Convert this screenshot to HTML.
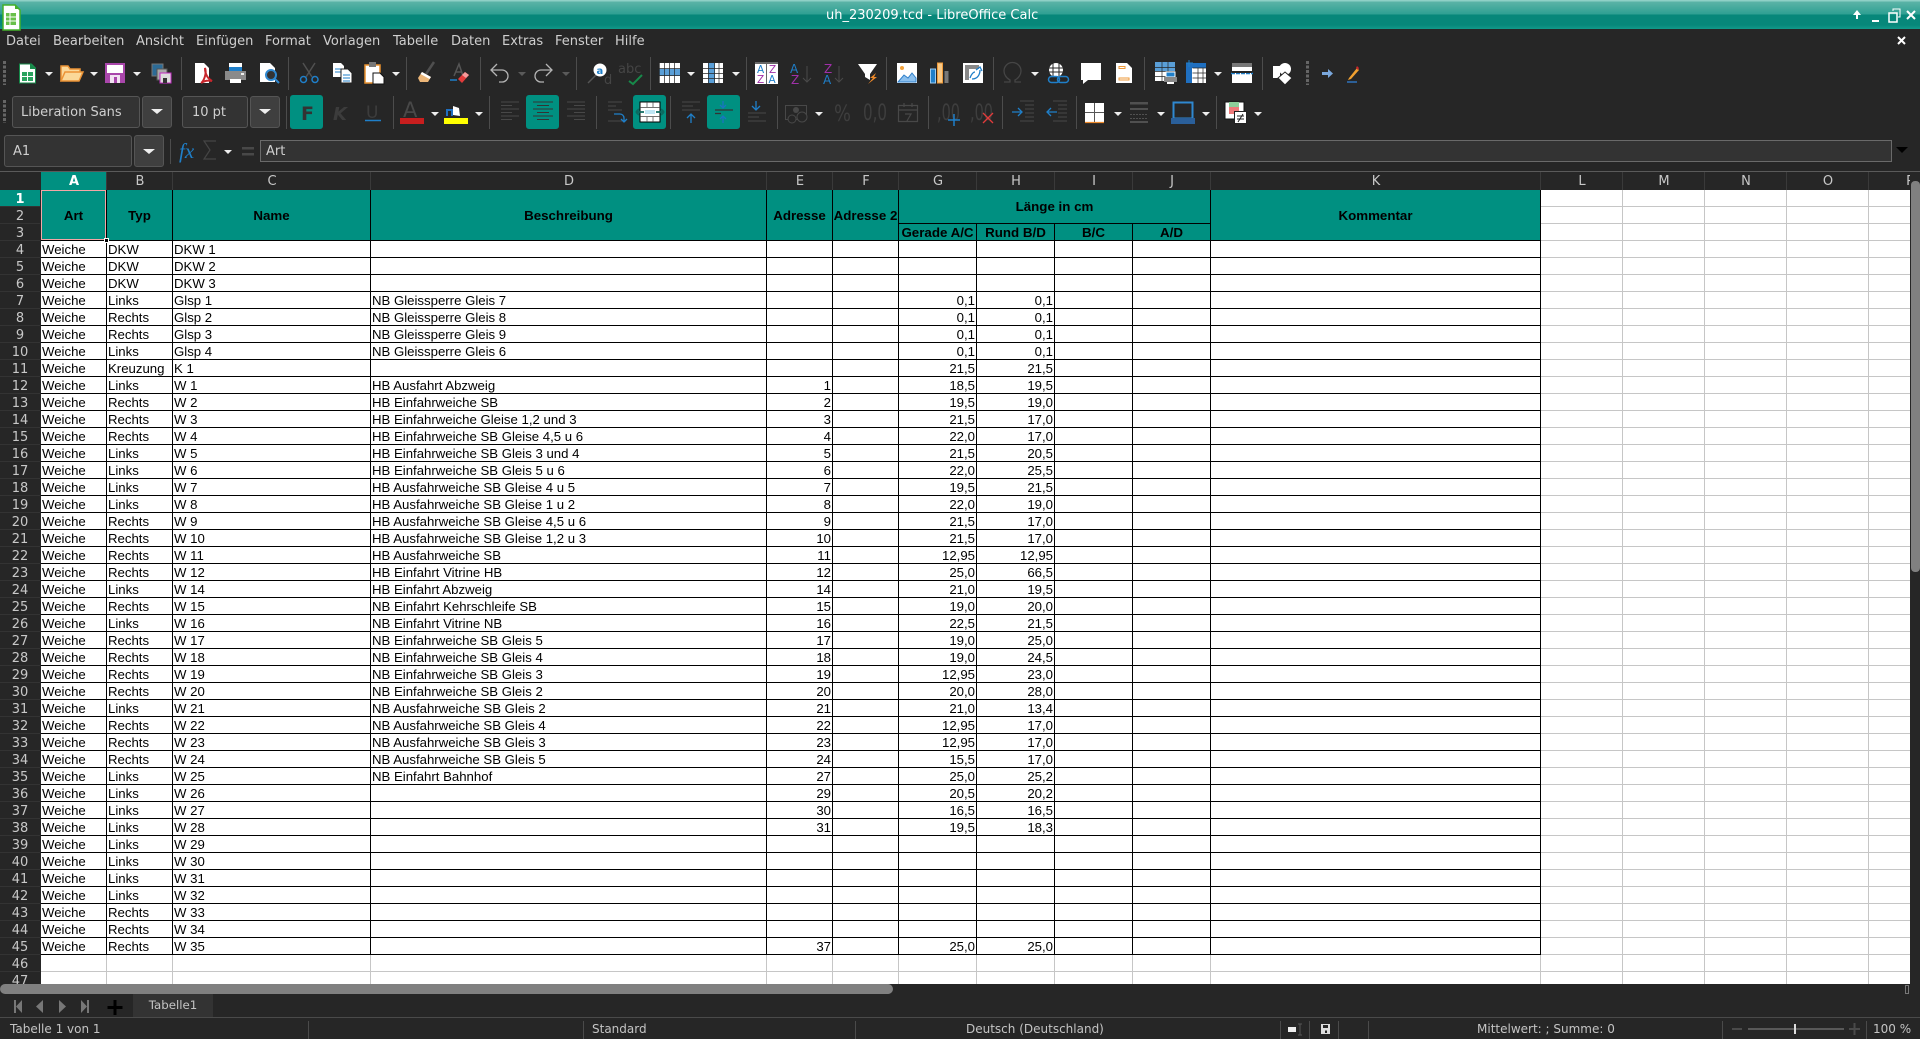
<!DOCTYPE html>
<html lang="de"><head><meta charset="utf-8"><title>uh_230209.tcd - LibreOffice Calc</title>
<style>
html,body{margin:0;padding:0;background:#262626;width:1920px;height:1039px;overflow:hidden}
body{position:relative;font-family:"DejaVu Sans",sans-serif;font-size:13px;color:#cfcfcf}
.abs,.m,.st{position:absolute;white-space:nowrap}
#title{position:absolute;left:0;top:0;width:1920px;height:29px;background:linear-gradient(#8fd0c6 0,#8fd0c6 1px,#5ab3a6 2px,#2fa093 14px,#07877a 15px,#07877a 25px,#12998a 29px);}
#title span{position:absolute;left:826px;top:8px;color:#fff;line-height:16px}
.m{top:34px;line-height:16px}
.box{position:absolute;background:#333;border:1px solid #555;border-radius:3px;box-sizing:border-box;line-height:32px;color:#cfcfcf}
.dd{position:absolute;background:#3f3f3f;border:1px solid #555;border-radius:3px;box-sizing:border-box}
.tb{position:absolute;background:#009081;border-radius:3px}
#ch,#rh{position:absolute;background:#262626;overflow:hidden}
#ch{left:41px;top:172px;width:1869px;height:18px}
#ch div{position:absolute;top:0;height:18px;line-height:20px;text-align:center;border-right:1px solid #3a3a3a;box-sizing:border-box;color:#c8c8c8;padding-left:1px}
#rh{left:0;top:190px;width:41px;height:794px}
#rh div{height:17px;line-height:19px;text-align:center;width:40px;color:#c8c8c8;box-sizing:border-box;border-bottom:1px solid #333}
#sheet{position:absolute;left:41px;top:190px;width:1869px;height:794px;overflow:hidden;background:#fff repeating-linear-gradient(to bottom,transparent 0,transparent 16px,#c6c6c6 16px,#c6c6c6 17px);font-family:"Liberation Sans",sans-serif;font-size:13.2px;color:#000}
.vg,.vb{position:absolute;top:0;width:1px;height:794px;background:#c6c6c6}
.vb{height:765px;background:#000}
.h{position:absolute;font-weight:bold;font-size:13.33px;text-align:center;white-space:nowrap;color:#000}
.r{height:17px;line-height:17px;position:relative}
.r span{position:absolute;white-space:nowrap;top:0}
.a{left:1px}.b{left:67px}.c{left:133px}.d{left:331px}.e{right:1079px}.g{right:935px}.i{right:857px}
.st{top:1022px;font-size:12px;line-height:15px;color:#c4c4c4}
</style></head><body>
<div id="title"><span>uh_230209.tcd - LibreOffice Calc</span></div>
<span class="m" style="left:6px">Datei</span><span class="m" style="left:53px">Bearbeiten</span><span class="m" style="left:136px">Ansicht</span><span class="m" style="left:196px">Einfügen</span><span class="m" style="left:265px">Format</span><span class="m" style="left:323px">Vorlagen</span><span class="m" style="left:393px">Tabelle</span><span class="m" style="left:451px">Daten</span><span class="m" style="left:502px">Extras</span><span class="m" style="left:555px">Fenster</span><span class="m" style="left:615px">Hilfe</span>

<div class="box" style="left:12px;top:96px;width:128px;height:32px;padding-left:8px">Liberation Sans</div>
<div class="dd" style="left:142px;top:96px;width:30px;height:32px"></div>
<div class="box" style="left:182px;top:96px;width:66px;height:32px;padding-left:9px">10 pt</div>
<div class="dd" style="left:250px;top:96px;width:30px;height:32px"></div>
<div class="box" style="left:4px;top:135px;width:128px;height:32px;padding-left:8px">A1</div>
<div class="dd" style="left:134px;top:135px;width:30px;height:32px"></div>
<div class="box" style="left:260px;top:140px;width:1632px;height:22px;line-height:22px;padding-left:5px;border-radius:0;border-color:#6a6a6a">Art</div>
<div class="tb" style="left:290px;top:95px;width:33px;height:34px"></div>
<div class="tb" style="left:526px;top:95px;width:33px;height:34px"></div>
<div class="tb" style="left:633px;top:95px;width:33px;height:34px"></div>
<div class="tb" style="left:707px;top:95px;width:33px;height:34px"></div>

<svg class="abs" style="left:0;top:0" width="1920" height="172" viewBox="0 0 1920 172">
<!-- app icon -->
<path d="M3 5h12l5 5v20H3z" fill="#fff" stroke="#43b02a" stroke-width="1.5"/><path d="M15 4l5 5h-5z" fill="#43b02a"/><path d="M6 13h10v12H6z" fill="#69c04a"/><path d="M6 17h10M6 21h10M10 13v12" stroke="#fff"/>
<!-- window controls -->
<path d="M1857 10l-4 5h3v4h2v-4h3z" fill="#fff"/><path d="M1872 20h7v2h-7z" fill="#fff"/>
<path d="M1889 13h8v9h-8z" fill="none" stroke="#fff" stroke-width="1.5"/><path d="M1893 11v-2h7v8h-2" fill="none" stroke="#fff"/>
<path d="M1907 11l8 8M1915 11l-8 8" stroke="#fff" stroke-width="2"/><path d="M1898 37l7 7M1905 37l-7 7" stroke="#fff" stroke-width="2"/>
<!-- handles -->
<path d="M4.500 61v24M4.500 100v23M1307.500 61v24" stroke="#666" stroke-width="3" stroke-dasharray="3 1.500"/>
<!-- separators -->
<path d="M181.500 57v33M288.500 57v33M406.500 57v33M480.500 57v33M576.500 57v33M650.500 57v33M746.500 57v33M886.500 57v33M993.500 57v33M1144.500 57v33M1262.500 57v33M286.500 96v33M393.500 96v33M489.500 96v33M596.500 96v33M670.500 96v33M777.500 96v33M928.500 96v33M1002.500 96v33M1076.500 96v33M1216.500 96v33M170.500 139v25" stroke="#4c4c4c"/>
<!-- drop arrows -->
<path d="M45 72h8l-4 4zM90 72h8l-4 4zM133 72h8l-4 4zM392 72h8l-4 4zM687 72h8l-4 4zM732 72h8l-4 4zM1031 72h8l-4 4zM1214 72h8l-4 4zM431 112h8l-4 4zM475 112h8l-4 4zM815 112h8l-4 4zM1114 112h8l-4 4zM1157 112h8l-4 4zM1202 112h8l-4 4zM1254 112h8l-4 4zM224 150h8l-4 4z" fill="#eee"/>
<path d="M518 72h8l-4 4zM562 72h8l-4 4z" fill="#5a5a5a"/>
<path d="M151 109h12l-6 5zM259 109h12l-6 5zM143 149h12l-6 5z" fill="#eee"/>
<path d="M1896 147h12l-6 6z" fill="#000"/>
<!-- new -->
<path d="M19.500 64h12l4 4v15h-16z" fill="#fff" stroke="#178a4a"/><path d="M30 63l6 6h-6z" fill="#178a4a"/><path d="M22 72h11v9H22z" fill="#2aa35f"/><path d="M22 76.500h11M27.500 72v9" stroke="#fff"/>
<!-- open -->
<path d="M61 81V66h7l2 3h10v4" fill="#fbd898" stroke="#ec9335" stroke-width="1.500"/><path d="M61 81l4-9h18l-4 9z" fill="#fbd898" stroke="#ec9335" stroke-width="1.500"/>
<!-- save -->
<path d="M105 63h20v20h-20z" fill="#a946ab"/><path d="M107 65h16v8h-16z" fill="#fff"/><path d="M110 75h10v8h-10z" fill="#f2e2f2"/><path d="M114 77h3v6h-3z" fill="#a946ab"/>
<!-- save all -->
<path d="M152 64h11v12h-11z" fill="#2c6b96" stroke="#777"/><path d="M157 69h10v11h-10z" fill="#aaa" stroke="#555"/><path d="M160 73h11v10h-11z" fill="#ddd" stroke="#c22cc4"/><path d="M163 78h4v5h-4z" fill="#333"/>
<!-- pdf -->
<path d="M195 63h9l5 5v15h-14z" fill="#fff"/><path d="M201 83c3-2 6-10 4-15 0 6 2 10 7 13-4-1-8 0-11 2z" fill="none" stroke="#c8262c" stroke-width="2"/>
<!-- print -->
<path d="M229 63h13v8h-13z" fill="#fff"/><path d="M229 67h13v4h-13z" fill="#1f7fc9"/><path d="M225 71h21v9h-21z" fill="#8a8a8a"/><path d="M230 79h11v4h-11z" fill="#fff"/><path d="M241 73h3v2h-3z" fill="#eee"/>
<!-- preview -->
<path d="M260 63h10l5 5v14h-15z" fill="#fff"/><circle cx="271" cy="75" r="5" fill="#333" stroke="#2f88d0" stroke-width="2"/><path d="M275 79l4 4" stroke="#2f88d0" stroke-width="2"/>
<!-- cut -->
<path d="M303 63l9 14M315 63l-9 14" stroke="#505050" stroke-width="1.500"/><circle cx="303.500" cy="79.500" r="3" fill="none" stroke="#1f7fc9" stroke-width="1.500"/><circle cx="315" cy="79.500" r="3" fill="none" stroke="#1f7fc9" stroke-width="1.500"/>
<!-- copy -->
<path d="M333 63h8l3 3v11h-11z" fill="#fff"/><path d="M335 69h6M335 72h6" stroke="#1f7fc9"/><path d="M341 69h7l4 4v10h-11z" fill="#fff" stroke="#222"/><path d="M343 75h7M343 78h7M343 81h7" stroke="#1f7fc9"/>
<!-- paste -->
<path d="M365 65h15v18h-15z" fill="#fff" stroke="#e8912e" stroke-width="1.500"/><path d="M369 62h7v5h-7z" fill="#777"/><path d="M373 73h7l4 4v7h-11z" fill="#fff" stroke="#111"/>
<!-- clone -->
<path d="M426 74l8-12" stroke="#4f4f4f" stroke-width="2.500"/><path d="M422 72l9 5-3 5h-8l-2-4z" fill="#ecb678"/><path d="M422 72l9 5-1.500 2-9-5z" fill="#fff"/>
<!-- clear -->
<path d="M454 76l5-12 4 12M456 72h6" fill="none" stroke="#555" stroke-width="1.500"/><path d="M450 80h7" stroke="#1f7fc9" stroke-width="1.500"/><path d="M458 79l7-7 4 3-7 8z" fill="#e23b3b"/><path d="M462 75l3-3 4 3-3 3z" fill="#f59a9a"/>
<!-- undo redo -->
<path d="M492 70h10a6 6 0 0 1 0 12h-3M497 64l-6 6 6 6" fill="none" stroke="#b4b4b4" stroke-width="1.300"/>
<path d="M551 70h-10a6 6 0 0 0 0 12h3M546 64l6 6-6 6" fill="none" stroke="#b4b4b4" stroke-width="1.300"/>
<!-- find -->
<path d="M596 75l-8 8" stroke="#555" stroke-width="1.500"/><circle cx="600" cy="70" r="6.500" fill="#fff"/><text x="596.500" y="74" font-size="10" font-weight="bold" fill="#1f7fc9" font-family="DejaVu Sans">a</text><text x="604" y="84" font-size="13" fill="#454545" font-family="DejaVu Sans">d</text>
<!-- spell -->
<text x="618" y="73" font-size="13" fill="#454545" font-family="DejaVu Sans">abc</text><path d="M629 81l4 3 9-9" fill="none" stroke="#178a4a" stroke-width="2"/>
<!-- rows -->
<path d="M659 63h21v20h-21z" fill="#fff"/><path d="M659 69h21v7h-21z" fill="#5a9fd8"/><path d="M659 68.500h21M659 75.500h21M659.500 63v20M664.500 63v20M669.500 63v20M674.500 63v20" stroke="#262626" stroke-width=".7"/>
<!-- cols -->
<path d="M703 63h20v20h-20z" fill="#fff"/><path d="M708 63h7v20h-7z" fill="#5a9fd8"/><path d="M703 68.500h20M703 73.500h20M703 78.500h20M708.500 63v20M714.500 63v20M719 63v20" stroke="#262626" stroke-width=".7"/>
<!-- sort -->
<path d="M755 62h23v22h-23z" fill="#fff"/><path d="M755 62h23v2h-23z" fill="#666"/><path d="M766.500 64v20" stroke="#666"/>
<g font-family="DejaVu Sans" font-size="10.500"><text x="757" y="73" fill="#1f7fc9">A</text><text x="757" y="83" fill="#a030a8">Z</text><text x="769" y="73" fill="#a030a8">Z</text><text x="768.500" y="83" fill="#1f7fc9">A</text>
<text x="790" y="73" font-size="12" fill="#1f7fc9">A</text><text x="791" y="84" font-size="12" fill="#a030a8">Z</text><text x="824" y="73" font-size="12" fill="#a030a8">Z</text><text x="823" y="84" font-size="12" fill="#1f7fc9">A</text></g>
<path d="M807 66v16M803 78l4 4 4-4M839 66v16M835 78l4 4 4-4" fill="none" stroke="#4a4a4a"/>
<!-- filter -->
<path d="M858 64h19l-7 10v6l-5-3v-3z" fill="#fff"/><path d="M876 73l-6 5h3l-5 6 9-7h-3z" fill="#ee8a2a"/>
<!-- image -->
<path d="M897 63h20v20h-20z" fill="#fff"/><path d="M898 82l6-7 4 3 4-5 4 5v4z" fill="#8cc0ee" stroke="#2f7fc9"/><circle cx="902" cy="68" r="2" fill="#f2a13b"/>
<!-- chart -->
<path d="M930.500 69h5v14h-5z" fill="#1f7fc9" stroke="#9ccbf0"/><path d="M937.500 63h5v20h-5z" fill="#f8c987" stroke="#ee9a3a"/><path d="M944.500 71h4v12h-4z" fill="#777"/>
<!-- pivot -->
<path d="M963 63h20v20h-20z" fill="#fff"/><path d="M965 65h14v4h-14zM965 65h4v15h-4z" fill="#888"/><path d="M972 79c6 0 8-5 8-9M976 70l4-3 2 4M970 78c1-3 3-6 5-6" fill="none" stroke="#1f7fc9" stroke-width="1.300"/>
<!-- omega -->
<path d="M1004 82h6v-2c-4-2-6-6-6-9a8 8 0 0 1 17 0c0 3-2 7-6 9v2h6" fill="none" stroke="#454545" stroke-width="1.300"/>
<!-- link -->
<circle cx="1056" cy="70" r="7" fill="#fff"/><path d="M1049 68h14M1049 72h14M1053 63v14M1059 63v14" stroke="#262626"/><rect x="1048.500" y="76.500" width="11" height="6" rx="3" fill="none" stroke="#1f7fc9" stroke-width="1.500"/><rect x="1057.500" y="76.500" width="11" height="6" rx="3" fill="none" stroke="#1f7fc9" stroke-width="1.500"/>
<!-- comment -->
<path d="M1081 63h20v17h-13l-5 4v-4h-2z" fill="#fff"/>
<!-- header -->
<path d="M1116 63h11l5 5v15h-16z" fill="#fff"/><path d="M1119 66.500h6v2h-6zM1119 78h10v2h-10z" fill="none" stroke="#ee9a3a"/>
<!-- print area -->
<path d="M1155 62h20v19h-20z" fill="#fff"/><path d="M1155 62h20v9h-20z" fill="#5a9fd8"/><path d="M1155 67.500h20M1162 62v19M1168 62v19M1155 71.500h20M1155 76.500h20" stroke="#262626" stroke-width=".7"/><path d="M1166 72h9v5h-9z" fill="#1f7fc9" stroke="#fff"/><path d="M1164 77h13v5h-13z" fill="#888"/><path d="M1167 82h7v2h-7z" fill="#fff"/>
<!-- freeze -->
<path d="M1186 63h20v20h-20z" fill="#fff"/><path d="M1186 63h20v5h-20zM1186 63h6v20h-6z" fill="#1f6fc0"/><path d="M1192.500 68h14M1192.500 73h14M1192.500 78h14M1198 68v15M1203 68v15" stroke="#262626" stroke-width=".7"/><path d="M1189 60v7M1186 63h7" stroke="#1f7fc9"/>
<!-- split -->
<path d="M1232 63h20v20h-20z" fill="#fff"/><path d="M1232 63h20v4h-20z" fill="#777"/><path d="M1231 73.500h22" stroke="#1f7fc9" stroke-width="1.500" stroke-dasharray="4 1"/><path d="M1232 71h20v2h-20z" fill="#262626"/>
<!-- shapes -->
<circle cx="1285" cy="69" r="6" fill="#fff"/><path d="M1280 66h-7v12h7z" fill="#fff"/><path d="M1285 72l7 6-7 7-7-7z" fill="#fff" stroke="#262626"/>
<path d="M1322 72h6v-3l5 4.500-5 4.500v-3h-6z" fill="#7aa7dc"/><path d="M1349 78l8-10 2 2-8 9-3 1z" fill="#f0a030"/><path d="M1357 66l2 2-1 2-2-2z" fill="#c8262c"/><path d="M1347 81h10v2h-10z" fill="#2c5f96"/>
<!-- Row 2 -->
<text x="301" y="120" font-family="DejaVu Sans" font-weight="bold" font-size="19" fill="#333">F</text>
<text x="333" y="120" font-family="DejaVu Sans" font-style="italic" font-weight="bold" font-size="18" fill="#3c3c3c">K</text>
<text x="366" y="118" font-family="DejaVu Sans" font-size="17" fill="#3c3c3c">U</text><path d="M365 120.500h16" stroke="#1f7fc9" stroke-width="1.500"/>
<text x="403" y="117" font-family="DejaVu Sans" font-size="21" fill="#484848">A</text><path d="M400 118h24v6h-24z" fill="#c81e1e"/>
<path d="M444 118h24v6h-24z" fill="#ff0"/><path d="M447 116v-6h5v6" fill="none" stroke="#1f6fc0" stroke-width="2"/><path d="M453 106l6 2 1 8-7-1z" fill="#fff"/>
<path d="M501 102h18M501 105.500h11M501 109h18M501 112.500h11M501 116h18M501 119.500h11M567 102h18M574 105.500h11M567 109h18M574 112.500h11M567 116h18M574 119.500h11" stroke="#484848"/>
<path d="M533 102h20M537 105.500h12M533 109h20M537 112.500h12M533 116h20M537 119.500h12" stroke="#333"/>
<path d="M608 102h14M608 106h8M608 110h14M608 121h18" stroke="#484848"/><path d="M614 114h6a4 4 0 0 1 4 4v3M621 119l3 3 3-3" fill="none" stroke="#1f7fc9" stroke-width="1.300"/>
<path d="M640 102h20v20h-20z" fill="#fff" stroke="#000"/><path d="M640 107.500h20M640 116.500h20M647 102v5M653 102v5M647 117v5M653 117v5" stroke="#444" stroke-width=".7"/><path d="M645 110h10v4h-10z" fill="#bfe6f5"/><path d="M636 112h8M636 112l3-3M636 112l3 3M664 112h-8M664 112l-3-3M664 112l-3 3" stroke="#0c6a60" stroke-width="1.800" fill="none"/>
<path d="M682 102h18M682 106h11M682 110h18" stroke="#484848"/><path d="M691 123v-9M687 118l4-4 4 4" fill="none" stroke="#1f7fc9" stroke-width="1.300"/>
<path d="M715 110h18" stroke="#333" stroke-width="1.300"/><path d="M715 113.500h6" stroke="#333" stroke-width="1.300"/><path d="M723 101v7M720 105l3 3 3-3M723 123v-7M720 119l3-3 3 3" fill="none" stroke="#1a75c0" stroke-width="1.300"/>
<path d="M748 113h18M748 117h11M748 121h18" stroke="#484848"/><path d="M756 101v9M752 106l4 4 4-4" fill="none" stroke="#1f7fc9" stroke-width="1.300"/>
<path d="M785.500 105.500h21v14h-21z" fill="none" stroke="#484848"/><circle cx="796" cy="110" r="3" fill="#484848"/><circle cx="792" cy="119" r="4" fill="#262626" stroke="#484848"/><circle cx="802" cy="117" r="5" fill="#262626" stroke="#484848"/>
<g font-family="DejaVu Sans" fill="#3e3e3e"><text x="834" y="121" font-size="22" textLength="17" lengthAdjust="spacingAndGlyphs">%</text><text x="863" y="120" font-size="22" textLength="24" lengthAdjust="spacingAndGlyphs">0,0</text><text x="937" y="120" font-size="22" textLength="23" lengthAdjust="spacingAndGlyphs">,00</text><text x="970" y="120" font-size="22" textLength="23" lengthAdjust="spacingAndGlyphs">,00</text></g>
<path d="M898.500 105.500h19v16h-19zM898.500 110h19M904 103v4M912 103v4M905 114h6l-4 7" fill="none" stroke="#484848" stroke-width="1.200"/>
<path d="M954 114v12M948 120h12" stroke="#1f7fc9" stroke-width="1.500"/><path d="M983 113l10 10M993 113l-10 10" stroke="#e23b3b" stroke-width="1.300"/>
<path d="M1012 112h9M1018 108l4 4-4 4M1048 112h9M1051 108l-4 4 4 4" fill="none" stroke="#1f7fc9" stroke-width="1.300"/>
<path d="M1020 101h14M1025 105h9M1025 109h9M1025 113h9M1025 117h9M1020 121h14M1053 101h14M1058 105h9M1058 109h9M1058 113h9M1058 117h9M1053 121h14" stroke="#484848"/>
<path d="M1085 103h19v19h-19z" fill="#fff"/><path d="M1094.500 103v19M1085 112.500h19" stroke="#555"/><path d="M1085 122.500h19" stroke="#ee8a2a" stroke-width="1.200"/>
<path d="M1130 102h18v2.500h-18zM1130 108h18v2h-18z" fill="#505050"/><path d="M1130 114.500h18M1130 118.500h18" stroke="#505050" stroke-dasharray="2 1"/><path d="M1130 121h18v2h-18z" fill="#505050"/>
<path d="M1173.500 102.500h19v16h-19z" fill="#262626" stroke="#2f88d0" stroke-width="2"/><path d="M1171 118h24v6h-24z" fill="#2a5f9a"/>
<path d="M1225 102h19v17h-19z" fill="#fff" stroke="#111"/><path d="M1229 102h10v5h-10z" fill="#8dcf9a"/><path d="M1229 107h10v7h-10z" fill="#ee7a7a"/><path d="M1234.500 111.500h12v12h-12z" fill="#fff" stroke="#222"/><path d="M1237 116h7M1237 119h7M1243 114l-5 8" stroke="#222" fill="none"/>
<!-- formula -->
<text x="179" y="158" font-family="Liberation Serif" font-style="italic" font-size="21" fill="#1f7fc9">fx</text>
<path d="M216 141h-12l6 9-6 9h12" fill="none" stroke="#454545" stroke-width="1.200"/>
<path d="M242 147h12v2.500h-12zM242 153h12v2.500h-12z" fill="#484848"/>
<path d="M0 171.500h1920" stroke="#5a5a5a"/>
</svg>

<div id="ch">
<div style="left:0;width:66px;background:#009081;color:#fff;font-weight:bold">A</div><div style="left:66px;width:66px">B</div><div style="left:132px;width:198px">C</div><div style="left:330px;width:396px">D</div><div style="left:726px;width:66px">E</div><div style="left:792px;width:66px">F</div><div style="left:858px;width:78px">G</div><div style="left:936px;width:78px">H</div><div style="left:1014px;width:78px">I</div><div style="left:1092px;width:78px">J</div><div style="left:1170px;width:330px">K</div><div style="left:1500px;width:82px">L</div><div style="left:1582px;width:82px">M</div><div style="left:1664px;width:82px">N</div><div style="left:1746px;width:82px">O</div><div style="left:1828px;width:82px">P</div>
</div>
<div id="rh">
<div style="background:#009081;color:#fff;font-weight:bold">1</div><div>2</div><div>3</div><div>4</div><div>5</div><div>6</div><div>7</div><div>8</div><div>9</div><div>10</div><div>11</div><div>12</div><div>13</div><div>14</div><div>15</div><div>16</div><div>17</div><div>18</div><div>19</div><div>20</div><div>21</div><div>22</div><div>23</div><div>24</div><div>25</div><div>26</div><div>27</div><div>28</div><div>29</div><div>30</div><div>31</div><div>32</div><div>33</div><div>34</div><div>35</div><div>36</div><div>37</div><div>38</div><div>39</div><div>40</div><div>41</div><div>42</div><div>43</div><div>44</div><div>45</div><div>46</div><div>47</div>
</div>

<div id="sheet">
<div class="vg" style="left:65px"></div><div class="vg" style="left:131px"></div><div class="vg" style="left:329px"></div><div class="vg" style="left:725px"></div><div class="vg" style="left:791px"></div><div class="vg" style="left:857px"></div><div class="vg" style="left:935px"></div><div class="vg" style="left:1013px"></div><div class="vg" style="left:1091px"></div><div class="vg" style="left:1169px"></div><div class="vg" style="left:1499px"></div><div class="vg" style="left:1581px"></div><div class="vg" style="left:1663px"></div><div class="vg" style="left:1745px"></div><div class="vg" style="left:1827px"></div>
<div style="position:absolute;left:0;top:0;width:1499px;height:50px;background:#009081"></div>
<div style="position:absolute;left:0;top:50px;width:1500px;height:715px;background:repeating-linear-gradient(to bottom,#000 0,#000 1px,transparent 1px,transparent 17px)"></div>
<div style="position:absolute;left:857px;top:33px;width:313px;height:1px;background:#000"></div>
<div class="vb" style="left:65px"></div><div class="vb" style="left:131px"></div><div class="vb" style="left:329px"></div><div class="vb" style="left:725px"></div><div class="vb" style="left:791px"></div><div class="vb" style="left:857px"></div>
<div class="vb" style="left:935px;top:33px;height:732px"></div><div class="vb" style="left:1013px;top:33px;height:732px"></div><div class="vb" style="left:1091px;top:33px;height:732px"></div>
<div class="vb" style="left:1169px"></div><div class="vb" style="left:1499px"></div>
<div style="position:absolute;left:0;top:0;width:65px;height:50px;border:1px solid #f4a6a6;box-sizing:border-box"></div>
<div style="position:absolute;left:63px;top:48px;width:5px;height:5px;background:#000;border:1px solid #fff;box-sizing:border-box"></div>

<div class="h" style="left:0;top:0;width:65px;line-height:52px">Art</div>
<div class="h" style="left:66px;top:0;width:65px;line-height:52px">Typ</div>
<div class="h" style="left:132px;top:0;width:197px;line-height:52px">Name</div>
<div class="h" style="left:330px;top:0;width:395px;line-height:52px">Beschreibung</div>
<div class="h" style="left:726px;top:0;width:65px;line-height:52px">Adresse</div>
<div class="h" style="left:792px;top:0;width:65px;line-height:52px">Adresse 2</div>
<div class="h" style="left:858px;top:0;width:311px;line-height:33px">Länge in cm</div>
<div class="h" style="left:858px;top:34px;width:77px;line-height:18px">Gerade A/C</div>
<div class="h" style="left:936px;top:34px;width:77px;line-height:18px">Rund B/D</div>
<div class="h" style="left:1014px;top:34px;width:77px;line-height:18px">B/C</div>
<div class="h" style="left:1092px;top:34px;width:77px;line-height:18px">A/D</div>
<div class="h" style="left:1170px;top:0;width:329px;line-height:52px">Kommentar</div>

<div style="position:absolute;left:0;top:51px;width:1869px">
<div class="r"><span class="a">Weiche</span><span class="b">DKW</span><span class="c">DKW 1</span></div>
<div class="r"><span class="a">Weiche</span><span class="b">DKW</span><span class="c">DKW 2</span></div>
<div class="r"><span class="a">Weiche</span><span class="b">DKW</span><span class="c">DKW 3</span></div>
<div class="r"><span class="a">Weiche</span><span class="b">Links</span><span class="c">Glsp 1</span><span class="d">NB Gleissperre Gleis 7</span><span class="g">0,1</span><span class="i">0,1</span></div>
<div class="r"><span class="a">Weiche</span><span class="b">Rechts</span><span class="c">Glsp 2</span><span class="d">NB Gleissperre Gleis 8</span><span class="g">0,1</span><span class="i">0,1</span></div>
<div class="r"><span class="a">Weiche</span><span class="b">Rechts</span><span class="c">Glsp 3</span><span class="d">NB Gleissperre Gleis 9</span><span class="g">0,1</span><span class="i">0,1</span></div>
<div class="r"><span class="a">Weiche</span><span class="b">Links</span><span class="c">Glsp 4</span><span class="d">NB Gleissperre Gleis 6</span><span class="g">0,1</span><span class="i">0,1</span></div>
<div class="r"><span class="a">Weiche</span><span class="b">Kreuzung</span><span class="c">K 1</span><span class="g">21,5</span><span class="i">21,5</span></div>
<div class="r"><span class="a">Weiche</span><span class="b">Links</span><span class="c">W 1</span><span class="d">HB Ausfahrt Abzweig</span><span class="e">1</span><span class="g">18,5</span><span class="i">19,5</span></div>
<div class="r"><span class="a">Weiche</span><span class="b">Rechts</span><span class="c">W 2</span><span class="d">HB Einfahrweiche SB</span><span class="e">2</span><span class="g">19,5</span><span class="i">19,0</span></div>
<div class="r"><span class="a">Weiche</span><span class="b">Rechts</span><span class="c">W 3</span><span class="d">HB Einfahrweiche Gleise 1,2 und 3</span><span class="e">3</span><span class="g">21,5</span><span class="i">17,0</span></div>
<div class="r"><span class="a">Weiche</span><span class="b">Rechts</span><span class="c">W 4</span><span class="d">HB Einfahrweiche SB Gleise 4,5 u 6</span><span class="e">4</span><span class="g">22,0</span><span class="i">17,0</span></div>
<div class="r"><span class="a">Weiche</span><span class="b">Links</span><span class="c">W 5</span><span class="d">HB Einfahrweiche SB Gleis 3 und 4</span><span class="e">5</span><span class="g">21,5</span><span class="i">20,5</span></div>
<div class="r"><span class="a">Weiche</span><span class="b">Links</span><span class="c">W 6</span><span class="d">HB Einfahrweiche SB Gleis 5 u 6</span><span class="e">6</span><span class="g">22,0</span><span class="i">25,5</span></div>
<div class="r"><span class="a">Weiche</span><span class="b">Links</span><span class="c">W 7</span><span class="d">HB Ausfahrweiche SB Gleise 4 u 5</span><span class="e">7</span><span class="g">19,5</span><span class="i">21,5</span></div>
<div class="r"><span class="a">Weiche</span><span class="b">Links</span><span class="c">W 8</span><span class="d">HB Ausfahrweiche SB Gleise 1 u 2</span><span class="e">8</span><span class="g">22,0</span><span class="i">19,0</span></div>
<div class="r"><span class="a">Weiche</span><span class="b">Rechts</span><span class="c">W 9</span><span class="d">HB Ausfahrweiche SB Gleise 4,5 u 6</span><span class="e">9</span><span class="g">21,5</span><span class="i">17,0</span></div>
<div class="r"><span class="a">Weiche</span><span class="b">Rechts</span><span class="c">W 10</span><span class="d">HB Ausfahrweiche SB Gleise 1,2 u 3</span><span class="e">10</span><span class="g">21,5</span><span class="i">17,0</span></div>
<div class="r"><span class="a">Weiche</span><span class="b">Rechts</span><span class="c">W 11</span><span class="d">HB Ausfahrweiche SB</span><span class="e">11</span><span class="g">12,95</span><span class="i">12,95</span></div>
<div class="r"><span class="a">Weiche</span><span class="b">Rechts</span><span class="c">W 12</span><span class="d">HB Einfahrt Vitrine HB</span><span class="e">12</span><span class="g">25,0</span><span class="i">66,5</span></div>
<div class="r"><span class="a">Weiche</span><span class="b">Links</span><span class="c">W 14</span><span class="d">HB Einfahrt Abzweig</span><span class="e">14</span><span class="g">21,0</span><span class="i">19,5</span></div>
<div class="r"><span class="a">Weiche</span><span class="b">Rechts</span><span class="c">W 15</span><span class="d">NB Einfahrt Kehrschleife SB</span><span class="e">15</span><span class="g">19,0</span><span class="i">20,0</span></div>
<div class="r"><span class="a">Weiche</span><span class="b">Links</span><span class="c">W 16</span><span class="d">NB Einfahrt Vitrine NB</span><span class="e">16</span><span class="g">22,5</span><span class="i">21,5</span></div>
<div class="r"><span class="a">Weiche</span><span class="b">Rechts</span><span class="c">W 17</span><span class="d">NB Einfahrweiche SB Gleis 5</span><span class="e">17</span><span class="g">19,0</span><span class="i">25,0</span></div>
<div class="r"><span class="a">Weiche</span><span class="b">Rechts</span><span class="c">W 18</span><span class="d">NB Einfahrweiche SB Gleis 4</span><span class="e">18</span><span class="g">19,0</span><span class="i">24,5</span></div>
<div class="r"><span class="a">Weiche</span><span class="b">Rechts</span><span class="c">W 19</span><span class="d">NB Einfahrweiche SB Gleis 3</span><span class="e">19</span><span class="g">12,95</span><span class="i">23,0</span></div>
<div class="r"><span class="a">Weiche</span><span class="b">Rechts</span><span class="c">W 20</span><span class="d">NB Einfahrweiche SB Gleis 2</span><span class="e">20</span><span class="g">20,0</span><span class="i">28,0</span></div>
<div class="r"><span class="a">Weiche</span><span class="b">Links</span><span class="c">W 21</span><span class="d">NB Ausfahrweiche SB Gleis 2</span><span class="e">21</span><span class="g">21,0</span><span class="i">13,4</span></div>
<div class="r"><span class="a">Weiche</span><span class="b">Rechts</span><span class="c">W 22</span><span class="d">NB Ausfahrweiche SB Gleis 4</span><span class="e">22</span><span class="g">12,95</span><span class="i">17,0</span></div>
<div class="r"><span class="a">Weiche</span><span class="b">Rechts</span><span class="c">W 23</span><span class="d">NB Ausfahrweiche SB Gleis 3</span><span class="e">23</span><span class="g">12,95</span><span class="i">17,0</span></div>
<div class="r"><span class="a">Weiche</span><span class="b">Rechts</span><span class="c">W 24</span><span class="d">NB Ausfahrweiche SB Gleis 5</span><span class="e">24</span><span class="g">15,5</span><span class="i">17,0</span></div>
<div class="r"><span class="a">Weiche</span><span class="b">Links</span><span class="c">W 25</span><span class="d">NB Einfahrt Bahnhof</span><span class="e">27</span><span class="g">25,0</span><span class="i">25,2</span></div>
<div class="r"><span class="a">Weiche</span><span class="b">Links</span><span class="c">W 26</span><span class="e">29</span><span class="g">20,5</span><span class="i">20,2</span></div>
<div class="r"><span class="a">Weiche</span><span class="b">Links</span><span class="c">W 27</span><span class="e">30</span><span class="g">16,5</span><span class="i">16,5</span></div>
<div class="r"><span class="a">Weiche</span><span class="b">Links</span><span class="c">W 28</span><span class="e">31</span><span class="g">19,5</span><span class="i">18,3</span></div>
<div class="r"><span class="a">Weiche</span><span class="b">Links</span><span class="c">W 29</span></div>
<div class="r"><span class="a">Weiche</span><span class="b">Links</span><span class="c">W 30</span></div>
<div class="r"><span class="a">Weiche</span><span class="b">Links</span><span class="c">W 31</span></div>
<div class="r"><span class="a">Weiche</span><span class="b">Links</span><span class="c">W 32</span></div>
<div class="r"><span class="a">Weiche</span><span class="b">Rechts</span><span class="c">W 33</span></div>
<div class="r"><span class="a">Weiche</span><span class="b">Rechts</span><span class="c">W 34</span></div>
<div class="r"><span class="a">Weiche</span><span class="b">Rechts</span><span class="c">W 35</span><span class="e">37</span><span class="g">25,0</span><span class="i">25,0</span></div>
</div>
</div>

<!-- scrollbars -->
<div class="abs" style="left:1911px;top:181px;width:9px;height:391px;background:#808080;border-radius:4px"></div>
<div class="abs" style="left:0;top:984px;width:893px;height:10px;background:#808080;border-radius:5px"></div>
<div class="abs" style="left:1905px;top:985px;width:2px;height:7px;background:#262626;border:1px solid #777"></div>

<!-- tab bar -->
<div class="abs" style="left:133px;top:994px;width:80px;height:23px;background:#333;line-height:23px;font-size:11.8px;text-align:center;color:#c4c4c4">Tabelle1</div>
<svg class="abs" style="left:0;top:994px" width="140" height="24" viewBox="0 0 140 24">
<path d="M14 6h2v13h-2zM22 6v13l-6-6.500z" fill="#777"/><path d="M43 6v13l-7-6.500z" fill="#777"/><path d="M59 6v13l7-6.500z" fill="#777"/><path d="M81 6v13l6-6.500zM87 6h2v13h-2z" fill="#777"/>
<path d="M113.500 6h3v6h6v3h-6v6h-3v-6h-6v-3h6z" fill="#000"/>
</svg>
<div class="abs" style="left:0;top:1017px;width:1920px;height:1px;background:#4a4a4a"></div>

<!-- status -->
<span class="st" style="left:10px">Tabelle 1 von 1</span>
<span class="st" style="left:592px">Standard</span>
<span class="st" style="left:966px">Deutsch (Deutschland)</span>
<span class="st" style="left:1477px">Mittelwert: ; Summe: 0</span>
<span class="st" style="left:1873px">100 %</span>
<svg class="abs" style="left:0;top:1018px" width="1920" height="21" viewBox="0 0 1920 21">
<path d="M308.500 3v18M583.500 3v18M855.500 3v18M1280.500 3v18M1309.500 3v18M1338.500 3v18M1368.500 3v18M1722.500 3v18M1866.500 3v18" stroke="#4a4a4a"/>
<path d="M1288 9h8v5h-8z" fill="#eee"/><path d="M1300 6v11M1298 6h4M1298 17h4" stroke="#555"/>
<path d="M1321 6h9v10h-9z" fill="#ddd"/><path d="M1323 7h5v3h-5z" fill="#262626"/><path d="M1325 12.500h2v2.500h-2z" fill="#262626"/>
<path d="M1732 11h10" stroke="#4a4a4a" stroke-width="2"/><path d="M1849 11h11M1854.500 5v12" stroke="#4a4a4a" stroke-width="2"/>
<path d="M1748 11h96" stroke="#8a8a8a"/><path d="M1794 6h2v10h-2z" fill="#ddd"/>
</svg>
</body></html>
